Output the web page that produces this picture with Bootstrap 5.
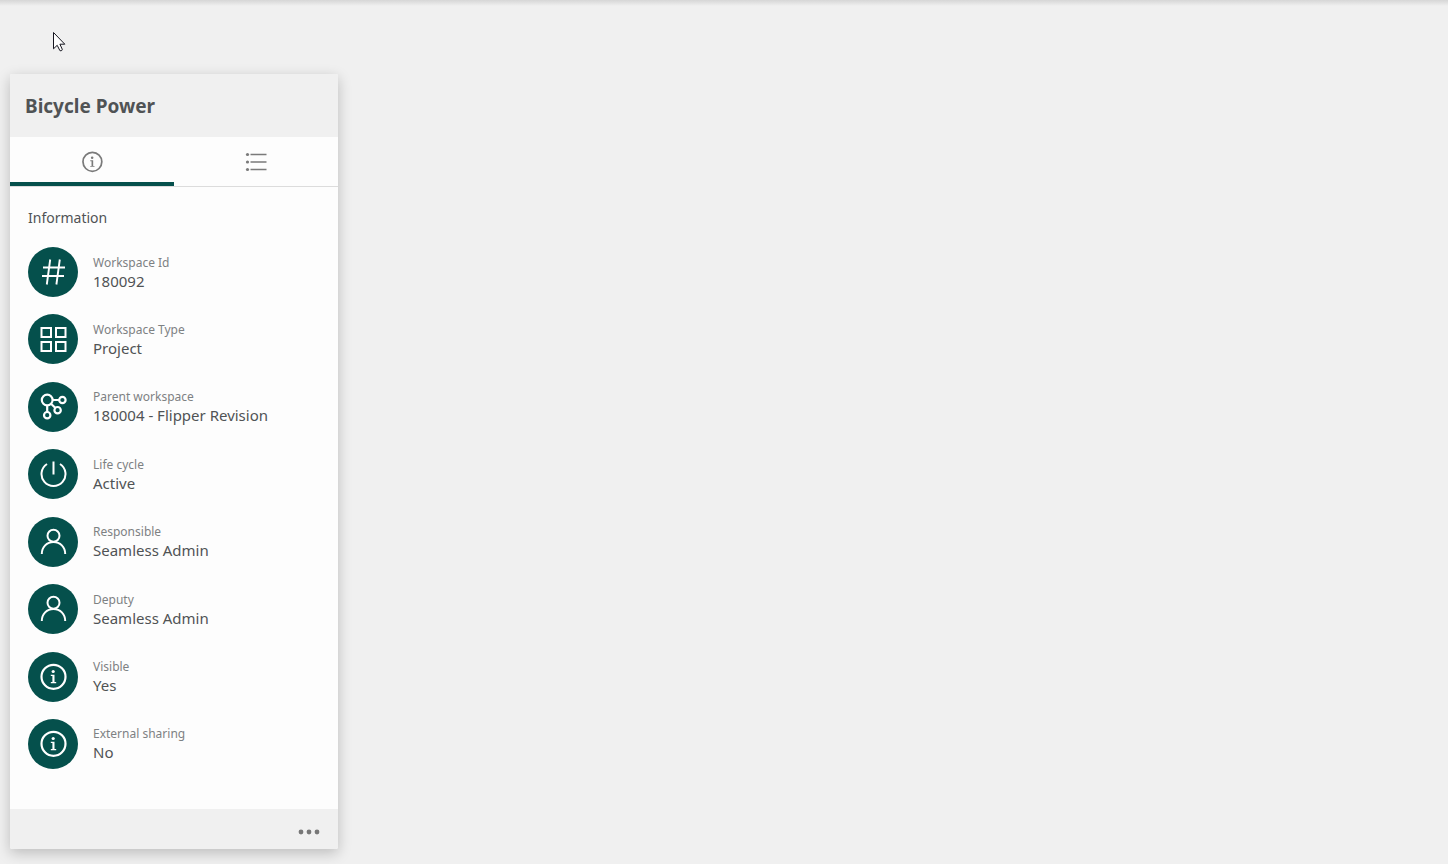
<!DOCTYPE html>
<html lang="en">
<head>
<meta charset="utf-8">
<meta name="viewport" content="width=device-width, initial-scale=1">
<title>Bicycle Power</title>
<link href="https://cdn.jsdelivr.net/npm/bootstrap@5.3.0/dist/css/bootstrap.min.css" rel="stylesheet">
<style>
  :root { --brand: #05504c; --surface: #f0f0f0; --ink: #505355; --muted-ink: #7d8183; }
  body { background: var(--surface); color: var(--ink); font-family: "Segoe UI", "Noto Sans", "Open Sans", sans-serif; }
  .top-shade { height: 6px; background: linear-gradient(#d6d6d6, var(--surface)); }
  .page-body { padding: 68px 10px 15px; }
  .workspace-card { width: 328px; border: 0; border-radius: 2px; background: #fdfdfd; box-shadow: 0 4px 14px rgba(0,0,0,.22); color: inherit; }
  .workspace-head { background: var(--surface); padding: 19px 15px 17px; border-radius: 2px 2px 0 0; }
  .workspace-head h1 { font-size: 19px; line-height: 27px; font-weight: 700; }
  .workspace-tabs { border-bottom: 1px solid #dcdcdc; }
  .workspace-tabs .nav-link { height: 49px; padding: 4px 0 0; border: 0; border-bottom: 4px solid transparent; border-radius: 0; background: transparent; color: #7a7a7a; line-height: 0; }
  .workspace-tabs .nav-link.active { border-color: var(--brand); }
  .info-panel { padding: 19px 18px 40px; }
  .info-panel h2 { font-size: 14px; line-height: 24px; font-weight: 400; margin-bottom: 17px; }
  .info-row { gap: 15px; }
  .round-icon { width: 50px; height: 50px; background: var(--brand); color: #fff; }
  .info-row dt { font-size: 12px; line-height: 18px; font-weight: 400; color: var(--muted-ink); }
  .info-row dd { font-size: 15px; line-height: 19px; margin: 0; }
  .workspace-foot { background: var(--surface); padding: 8px 16px; border-radius: 0 0 2px 2px; }
  .more-btn { padding: 2px; line-height: 0; color: #777; border: 0; }
  .pointer { position: absolute; left: 53px; top: 31px; }
  svg { fill: none; stroke: currentColor; }
</style>
</head>
<body class="min-vh-100 d-flex flex-column">
<svg width="0" height="0" class="position-absolute" aria-hidden="true">
  <symbol id="info" viewBox="0 0 28 28">
    <circle cx="14.5" cy="13.8" r="12" stroke-width="2.2"/>
    <circle cx="14.2" cy="8.5" r="1.6" fill="currentColor" stroke="none"/>
    <path d="M11.8 11.8h3.7v7.2h1.7v1.2h-5.4v-1.2h1.6v-6h-1.6z" fill="currentColor" stroke="none"/>
  </symbol>
  <symbol id="person" viewBox="0 0 28 28">
    <circle cx="14.5" cy="7.8" r="6" stroke-width="2"/>
    <path d="M2.8 26c0-7 5-12 11.7-12s11.7 5 11.7 12" stroke-width="2"/>
  </symbol>
</svg>
<div class="top-shade"></div>
<svg class="pointer" width="13" height="21" viewBox="0 0 13 21" aria-hidden="true"><path d="M.5 1.5v16.3l3.7-3.5 2.7 5.3c1.3.6 2.8-.3 2.3-1.5L6.9 13.2h4.9z" fill="#fff" stroke="#15151f"/></svg>
<main class="page-body flex-grow-1 d-flex align-items-stretch">
  <section class="card workspace-card">
    <header class="workspace-head"><h1 class="m-0">Bicycle Power</h1></header>
    <div class="nav nav-fill workspace-tabs" role="tablist">
      <button type="button" class="nav-link active d-flex w-50 align-items-center justify-content-center" role="tab" aria-selected="true" aria-controls="information" aria-label="Information">
        <svg width="22" height="22" aria-hidden="true"><use href="#info"/></svg>
      </button>
      <button type="button" class="nav-link d-flex w-50 align-items-center justify-content-center" role="tab" aria-selected="false" aria-label="List">
        <svg width="22" height="20" viewBox="0 0 22 20" aria-hidden="true"><path d="M5.5 2.5h16M5.5 10h16M5.5 17.5h16" stroke-width="1.5"/><g fill="currentColor" stroke="none"><circle cx="2.5" cy="2.5" r="1.6"/><circle cx="2.5" cy="10" r="1.6"/><circle cx="2.5" cy="17.5" r="1.6"/></g></svg>
      </button>
    </div>
    <div class="info-panel flex-grow-1 d-flex flex-column" id="information" role="tabpanel">
      <h2>Information</h2>
      <dl class="flex-grow-1 d-flex flex-column justify-content-between m-0">
        <div class="info-row d-flex align-items-center">
          <span class="round-icon rounded-circle d-flex align-items-center justify-content-center"><svg width="28" height="28" viewBox="0 0 28 28" aria-hidden="true"><path d="M11.2 1.5 7.8 26.5M20.8 1.5 17.4 26.5M4 9.5H26M3 18H25" stroke-width="1.9"/></svg></span>
          <div><dt>Workspace Id</dt><dd>180092</dd></div>
        </div>
        <div class="info-row d-flex align-items-center">
          <span class="round-icon rounded-circle d-flex align-items-center justify-content-center"><svg width="28" height="28" viewBox="0 0 28 28" aria-hidden="true"><path d="M2.5 3h9.5v9H2.5zM17 3h9.5v9H17zM2.5 17h9.5v9H2.5zM17 17h9.5v9H17z" stroke-width="2"/></svg></span>
          <div><dt>Workspace Type</dt><dd>Project</dd></div>
        </div>
        <div class="info-row d-flex align-items-center">
          <span class="round-icon rounded-circle d-flex align-items-center justify-content-center"><svg width="28" height="28" viewBox="0 0 28 28" aria-hidden="true"><g stroke-width="2.2"><circle cx="8.2" cy="7" r="5.4"/><circle cx="23.4" cy="7" r="3.2"/><circle cx="18.6" cy="17.2" r="3.2"/><circle cx="8.2" cy="22.2" r="3.2"/><path d="M13.6 7h6.6M8.2 12.4V19M12 10.8l4.2 4"/></g></svg></span>
          <div><dt>Parent workspace</dt><dd>180004 - Flipper Revision</dd></div>
        </div>
        <div class="info-row d-flex align-items-center">
          <span class="round-icon rounded-circle d-flex align-items-center justify-content-center"><svg width="28" height="28" viewBox="0 0 28 28" aria-hidden="true"><path d="M14.5 1.5v13M8 4a12 12 0 1 0 13 0" stroke-width="2"/></svg></span>
          <div><dt>Life cycle</dt><dd>Active</dd></div>
        </div>
        <div class="info-row d-flex align-items-center">
          <span class="round-icon rounded-circle d-flex align-items-center justify-content-center"><svg width="28" height="28" aria-hidden="true"><use href="#person"/></svg></span>
          <div><dt>Responsible</dt><dd>Seamless Admin</dd></div>
        </div>
        <div class="info-row d-flex align-items-center">
          <span class="round-icon rounded-circle d-flex align-items-center justify-content-center"><svg width="28" height="28" aria-hidden="true"><use href="#person"/></svg></span>
          <div><dt>Deputy</dt><dd>Seamless Admin</dd></div>
        </div>
        <div class="info-row d-flex align-items-center">
          <span class="round-icon rounded-circle d-flex align-items-center justify-content-center"><svg width="28" height="28" aria-hidden="true"><use href="#info"/></svg></span>
          <div><dt>Visible</dt><dd>Yes</dd></div>
        </div>
        <div class="info-row d-flex align-items-center">
          <span class="round-icon rounded-circle d-flex align-items-center justify-content-center"><svg width="28" height="28" aria-hidden="true"><use href="#info"/></svg></span>
          <div><dt>External sharing</dt><dd>No</dd></div>
        </div>
      </dl>
    </div>
    <footer class="workspace-foot d-flex justify-content-end">
      <button type="button" class="btn more-btn" aria-label="More options"><svg width="22" height="20" viewBox="0 0 22 20" aria-hidden="true"><g fill="currentColor" stroke="none"><circle cx="3" cy="13" r="2.4"/><circle cx="11" cy="13" r="2.4"/><circle cx="19" cy="13" r="2.4"/></g></svg></button>
    </footer>
  </section>
</main>
<script src="https://cdn.jsdelivr.net/npm/bootstrap@5.3.0/dist/js/bootstrap.bundle.min.js"></script>
</body>
</html>
